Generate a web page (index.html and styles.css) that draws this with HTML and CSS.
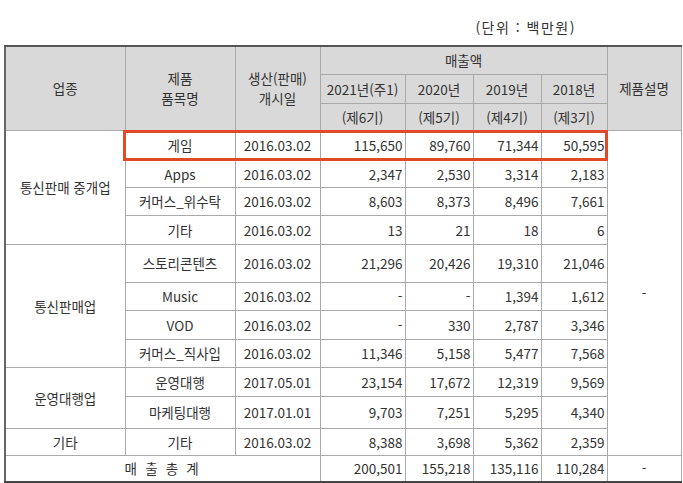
FILE: index.html
```html
<!DOCTYPE html>
<html lang="ko">
<head>
<meta charset="utf-8">
<link rel="stylesheet" href="styles.css">
</head>
<body>
<div class="page">
  <div class="unit">(단위 : 백만원)</div>
  <div class="wrap">
    <table class="sales">
      <colgroup>
        <col class="c-ind"><col class="c-prod"><col class="c-date">
        <col class="c-y1"><col class="c-y2"><col class="c-y3"><col class="c-y4"><col class="c-desc">
      </colgroup>
      <thead>
        <tr class="h1">
          <th rowspan="3">업종</th>
          <th rowspan="3" class="two">제품<br>품목명</th>
          <th rowspan="3" class="two">생산(판매)<br>개시일</th>
          <th colspan="4">매출액</th>
          <th rowspan="3">제품설명</th>
        </tr>
        <tr class="h2">
          <th>2021년(주1)</th><th>2020년</th><th>2019년</th><th>2018년</th>
        </tr>
        <tr class="h3">
          <th>(제6기)</th><th>(제5기)</th><th>(제4기)</th><th>(제3기)</th>
        </tr>
      </thead>
      <tbody>
        <tr class="r30">
          <td rowspan="4" class="ctr">통신판매 중개업</td>
          <td class="ctr">게임</td><td class="ctr">2016.03.02</td>
          <td class="num">115,650</td><td class="num">89,760</td><td class="num">71,344</td><td class="num">50,595</td>
          <td rowspan="11" class="ctr">-</td>
        </tr>
        <tr class="r27">
          <td class="ctr">Apps</td><td class="ctr">2016.03.02</td>
          <td class="num">2,347</td><td class="num">2,530</td><td class="num">3,314</td><td class="num">2,183</td>
        </tr>
        <tr class="r28">
          <td class="ctr">커머스_위수탁</td><td class="ctr">2016.03.02</td>
          <td class="num">8,603</td><td class="num">8,373</td><td class="num">8,496</td><td class="num">7,661</td>
        </tr>
        <tr class="r29">
          <td class="ctr">기타</td><td class="ctr">2016.03.02</td>
          <td class="num">13</td><td class="num">21</td><td class="num">18</td><td class="num">6</td>
        </tr>
        <tr class="r38">
          <td rowspan="4" class="ctr">통신판매업</td>
          <td class="ctr">스토리콘텐츠</td><td class="ctr">2016.03.02</td>
          <td class="num">21,296</td><td class="num">20,426</td><td class="num">19,310</td><td class="num">21,046</td>
        </tr>
        <tr class="r28">
          <td class="ctr">Music</td><td class="ctr">2016.03.02</td>
          <td class="num">-</td><td class="num">-</td><td class="num">1,394</td><td class="num">1,612</td>
        </tr>
        <tr class="r29">
          <td class="ctr">VOD</td><td class="ctr">2016.03.02</td>
          <td class="num">-</td><td class="num">330</td><td class="num">2,787</td><td class="num">3,346</td>
        </tr>
        <tr class="r28">
          <td class="ctr">커머스_직사입</td><td class="ctr">2016.03.02</td>
          <td class="num">11,346</td><td class="num">5,158</td><td class="num">5,477</td><td class="num">7,568</td>
        </tr>
        <tr class="r29">
          <td rowspan="2" class="ctr">운영대행업</td>
          <td class="ctr">운영대행</td><td class="ctr">2017.05.01</td>
          <td class="num">23,154</td><td class="num">17,672</td><td class="num">12,319</td><td class="num">9,569</td>
        </tr>
        <tr class="r32">
          <td class="ctr">마케팅대행</td><td class="ctr">2017.01.01</td>
          <td class="num">9,703</td><td class="num">7,251</td><td class="num">5,295</td><td class="num">4,340</td>
        </tr>
        <tr class="r27">
          <td class="ctr">기타</td>
          <td class="ctr">기타</td><td class="ctr">2016.03.02</td>
          <td class="num">8,388</td><td class="num">3,698</td><td class="num">5,362</td><td class="num">2,359</td>
        </tr>
      </tbody>
      <tfoot>
        <tr class="r27">
          <td colspan="3" class="ctr spaced">매 출 총 계</td>
          <td class="num">200,501</td><td class="num">155,218</td><td class="num">135,116</td><td class="num">110,284</td>
          <td class="ctr">-</td>
        </tr>
      </tfoot>
    </table>
    <div class="highlight"></div>
  </div>
</div>
</body>
</html>
```
FILE: styles.css
```css
html, body {
  margin: 0;
  padding: 0;
  background: #ffffff;
}
body {
  font-family: "Noto Sans CJK KR", "Noto Sans", sans-serif;
  font-size: 13.5px;
  color: #333333;
}
.page {
  width: 683px;
  height: 483px;
  overflow: hidden;
}
.unit {
  height: 45px;
  box-sizing: border-box;
  padding: 17px 107px 0 0;
  text-align: right;
  line-height: 20px;
  font-size: 14px;
  letter-spacing: 1.5px;
  color: #333;
}
.wrap {
  position: relative;
  margin-left: 4px;
  width: 676px;
}
.sales {
  border-collapse: collapse;
  table-layout: fixed;
  width: 676px;
  border-top: 2px solid #555;
  border-bottom: 2px solid #444;
  border-left: 2px solid #666;
  border-right: 1px solid #777;
}
.c-ind { width: 120px; }
.c-prod { width: 110px; }
.c-date { width: 85px; }
.c-y1 { width: 85px; }
.c-y2 { width: 68px; }
.c-y3 { width: 68px; }
.c-y4 { width: 66px; }
.c-desc { width: 74px; }
.sales th, .sales td {
  border: 1px solid #a9a9a9;
  padding: 0 2px;
  line-height: 16px;
  white-space: nowrap;
}
.sales th {
  background: #d9d9d9;
  font-weight: normal;
  text-align: center;
  color: #333;
}
.h1 { height: 28px; }
.h2 { height: 29px; }
.h3 { height: 27px; }
.sales thead th.two { line-height: 20px; }
.ctr { text-align: center; }
.num { text-align: right; padding-right: 2px; }
.spaced { letter-spacing: 2.2px; }
.r27 { height: 27px; }
.r28 { height: 28px; }
.r29 { height: 29px; }
.r30 { height: 30px; }
.r32 { height: 32px; }
.r38 { height: 38px; }
.sales tfoot td { border-top: 1px solid #555; }
.highlight {
  position: absolute;
  left: 119px;
  top: 85px;
  width: 479px;
  height: 25px;
  border: 3px solid #e04a2a;
  pointer-events: none;
}
```
